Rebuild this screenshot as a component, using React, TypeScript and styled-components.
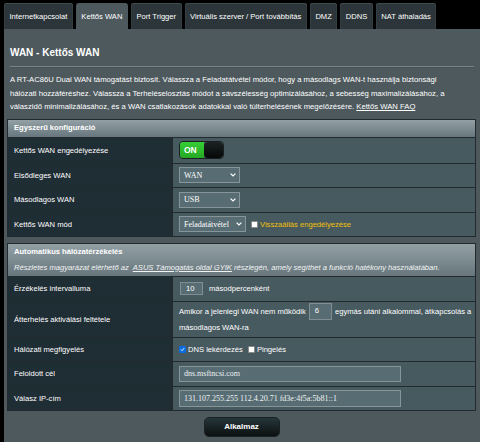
import React from 'react';
import styled, { createGlobalStyle } from 'styled-components';

const GlobalStyle = createGlobalStyle`
  html, body {
    margin: 0;
    padding: 0;
    background: #000;
  }
  body {
    font-family: "Liberation Sans", Arial, sans-serif;
    font-size: 7.6px;
    color: #fff;
  }
  * {
    box-sizing: border-box;
  }
`;

const TABS = [
  'Internetkapcsolat',
  'Kettős WAN',
  'Port Trigger',
  'Virtuális szerver / Port továbbítás',
  'DMZ',
  'DDNS',
  'NAT áthaladás',
];

const Chevron = () => (
  <svg width="6" height="4" viewBox="0 0 6 4">
    <path d="M0.6 0.6 L3 3 L5.4 0.6" fill="none" stroke="#fff" strokeWidth="1.2" />
  </svg>
);

const Check = ({ checked }: { checked?: boolean }) => (
  <CheckBox checked={checked}>
    {checked && (
      <svg width="7" height="7" viewBox="0 0 7 7">
        <path d="M1.3 3.6 L2.8 5.1 L5.8 1.6" fill="none" stroke="#fff" strokeWidth="1.3" />
      </svg>
    )}
  </CheckBox>
);

const App = () => {
  return (
    <>
      <GlobalStyle />
      <Page>
        <TabBar>
          {TABS.map((tab) => (
            <Tab key={tab} active={tab === 'Kettős WAN'}>
              {tab}
            </Tab>
          ))}
        </TabBar>
        <Panel>
          <Title>WAN - Kettős WAN</Title>
          <Divider />
          <Intro>
            A RT-AC86U Dual WAN támogatást biztosít. Válassza a Feladatátvétel módor, hogy a másodlags WAN-t használja biztonsági
            <br />
            hálózati hozzáféréshez. Válassza a Terheléselosztás módot a sávszélesség optimizálásához, a sebesség maximalizálásához, a
            <br />
            válaszidő minimalizálásához, és a WAN csatlakozások adatokkal való túlterhelésének megelőzésére.{' '}
            <Link>Kettős WAN FAQ</Link>
          </Intro>

          <Section>
            <SectionHead h={17}>
              <HeadTitle>Egyszerű konfiguráció</HeadTitle>
            </SectionHead>
            <Row h={25}>
              <Label>Kettős WAN engedélyezése</Label>
              <Cell>
                <Switch>
                  <SwitchOn>ON</SwitchOn>
                  <SwitchOff />
                </Switch>
              </Cell>
            </Row>
            <Row h={23}>
              <Label>Elsődleges WAN</Label>
              <Cell>
                <Select w={61}>
                  WAN
                  <Chevron />
                </Select>
              </Cell>
            </Row>
            <Row h={24}>
              <Label>Másodlagos WAN</Label>
              <Cell>
                <Select w={61}>
                  USB
                  <Chevron />
                </Select>
              </Cell>
            </Row>
            <Row h={23}>
              <Label>Kettős WAN mód</Label>
              <Cell>
                <Select w={67}>
                  Feladatátvétel
                  <Chevron />
                </Select>
                <Option>
                  <Check />
                  <Warn>Visszaállás engedélyezése</Warn>
                </Option>
              </Cell>
            </Row>
          </Section>

          <Section>
            <SectionHead h={32}>
              <HeadTitle>Automatikus hálózatérzékelés</HeadTitle>
              <HeadNote>
                Részletes magyarázat elérhető az&nbsp; <Link>ASUS Támogatás oldal GYIK</Link> részlegén, amely segíthet a
                funkció hatékony használatában.
              </HeadNote>
            </SectionHead>
            <Row h={24}>
              <Label>Érzékelés intervalluma</Label>
              <Cell>
                <SmallInput h={13}>10</SmallInput>
                <span>másodpercenként</span>
              </Cell>
            </Row>
            <Row h={35}>
              <Label>Átterhelés aktiválási feltétele</Label>
              <Cell>
                <Para>
                  Amikor a jelenlegi WAN nem működik <SmallInput h={17}>6</SmallInput> egymás utáni alkalommal, átkapcsolás a
                  <br />
                  másodlagos WAN-ra
                </Para>
              </Cell>
            </Row>
            <Row h={23}>
              <Label>Hálózati megfigyelés</Label>
              <Cell>
                <Option>
                  <Check checked />
                  DNS lekérdezés
                </Option>
                <Option>
                  <Check />
                  Pingelés
                </Option>
              </Cell>
            </Row>
            <Row h={24}>
              <Label>Feloldott cél</Label>
              <Cell>
                <TextInput h={16}>dns.msftncsi.com</TextInput>
              </Cell>
            </Row>
            <Row h={23}>
              <Label>Válasz IP-cím</Label>
              <Cell>
                <TextInput h={17}>131.107.255.255 112.4.20.71 fd3e:4f5a:5b81::1</TextInput>
              </Cell>
            </Row>
          </Section>

          <ApplyButton>Alkalmaz</ApplyButton>
        </Panel>
      </Page>
    </>
  );
};

export default App;

const Page = styled.div`
  width: 480px;
  height: 442px;
  overflow: hidden;
  padding: 3px 0 0 4px;
  display: flex;
  flex-direction: column;
`;

const TabBar = styled.div`
  display: flex;
  gap: 3px;
  height: 26px;
`;

const Tab = styled.div<{ active?: boolean }>`
  display: flex;
  align-items: center;
  padding: 0 5.5px;
  white-space: nowrap;
  border-radius: 3px 3px 0 0;
  background: ${(props) => (props.active ? '#4d595d' : '#2c363a')};
  box-shadow: ${(props) => (props.active ? 'none' : 'inset 0 1px 0 #3d494d, inset 1px 0 0 #343f43, inset -1px 0 0 #343f43')};
  color: #fff;
`;

const Panel = styled.div`
  flex: 1;
  display: flex;
  flex-direction: column;
  background: #4d595d;
  padding: 0 4px 0 3px;
`;

const Title = styled.div`
  margin: 16.5px 0 0 3px;
  font-size: 10px;
  font-weight: bold;
  line-height: 13px;
`;

const Divider = styled.div`
  height: 1px;
  margin: 7.5px 2px 0 3px;
  background: #75848a;
  box-shadow: 0 1px 0 #445155;
`;

const Intro = styled.p`
  margin: 6px 0 0 3px;
  font-size: 7.7px;
  line-height: 13.5px;
  white-space: nowrap;
`;

const Link = styled.span`
  text-decoration: underline;
`;

const Section = styled.div`
  display: flex;
  flex-direction: column;
  margin-top: 6px;
  width: 469px;
  border: 1px solid #222a2d;
  &:nth-of-type(3) {
    margin-top: 5px;
  }
`;

const SectionHead = styled.div<{ h: number }>`
  height: ${(props) => props.h}px;
  display: flex;
  flex-direction: column;
  justify-content: center;
  padding: 0 6px;
  background: linear-gradient(#93a1a6 0%, #67767c 100%);
`;

const HeadTitle = styled.div`
  font-weight: bold;
  line-height: 16px;
`;

const HeadNote = styled.div`
  font-style: italic;
  line-height: 16px;
  white-space: nowrap;
  color: #f2f4f4;
`;

const Row = styled.div<{ h: number }>`
  display: grid;
  grid-template-columns: 164px 1fr;
  height: ${(props) => props.h + 1}px;
  border-top: 1px solid #222a2d;
`;

const Label = styled.div`
  display: flex;
  align-items: center;
  padding-left: 6px;
  background: #1f2d35;
`;

const Cell = styled.div`
  display: flex;
  align-items: center;
  gap: 5px;
  padding-left: 6px;
  background: #475a5f;
  border-left: 1px solid #222a2d;
`;

const Para = styled.div`
  line-height: 16px;
  white-space: nowrap;
`;

const Switch = styled.div`
  display: flex;
  width: 45px;
  height: 18px;
  border-radius: 4px;
  overflow: hidden;
  border: 1px solid #1a1f20;
`;

const SwitchOn = styled.div`
  width: 24px;
  display: flex;
  align-items: center;
  padding-left: 4px;
  background: linear-gradient(#35cf35, #25a825);
  font-weight: bold;
  font-size: 8.5px;
`;

const SwitchOff = styled.div`
  flex: 1;
  background: linear-gradient(#1c2224, #050707);
  border-radius: 4px;
`;

const Select = styled.div<{ w: number }>`
  width: ${(props) => props.w}px;
  height: 16px;
  display: flex;
  align-items: center;
  justify-content: space-between;
  padding: 0 3px 0 4px;
  border: 1px solid #86959a;
  background: #576d73;
  font-family: "Liberation Serif", "Times New Roman", serif;
  font-size: 8px;
`;

const Option = styled.label`
  display: flex;
  align-items: center;
  gap: 2px;
`;

const CheckBox = styled.span<{ checked?: boolean }>`
  width: 7px;
  height: 7px;
  display: flex;
  align-items: center;
  justify-content: center;
  border-radius: 1px;
  background: ${(props) => (props.checked ? '#0b6ee0' : '#fff')};
  border: 1px solid ${(props) => (props.checked ? '#0b6ee0' : '#8a8a8a')};
`;

const Warn = styled.span`
  color: #f2c00a;
`;

const SmallInput = styled.span<{ h: number }>`
  display: inline-flex;
  align-items: center;
  vertical-align: middle;
  width: 23px;
  height: ${(props) => props.h}px;
  margin: 0 1px;
  padding-left: 5px;
  border: 1px solid #7f8e93;
  background: #576d73;
`;

const TextInput = styled.div<{ h: number }>`
  width: 222px;
  height: ${(props) => props.h}px;
  display: flex;
  align-items: center;
  padding-left: 4px;
  border: 1px solid #86959a;
  background: #576d73;
  font-family: "Liberation Serif", "Times New Roman", serif;
  font-size: 8px;
  color: #eef2f3;
`;

const ApplyButton = styled.button`
  align-self: center;
  margin-top: 6px;
  width: 76px;
  height: 20px;
  border-radius: 5px;
  border: 1px solid #1b2224;
  background: linear-gradient(#25363b 0%, #0d1011 100%);
  color: #fff;
  font-family: "Liberation Sans", Arial, sans-serif;
  font-size: 8px;
  font-weight: bold;
  cursor: pointer;
`;
